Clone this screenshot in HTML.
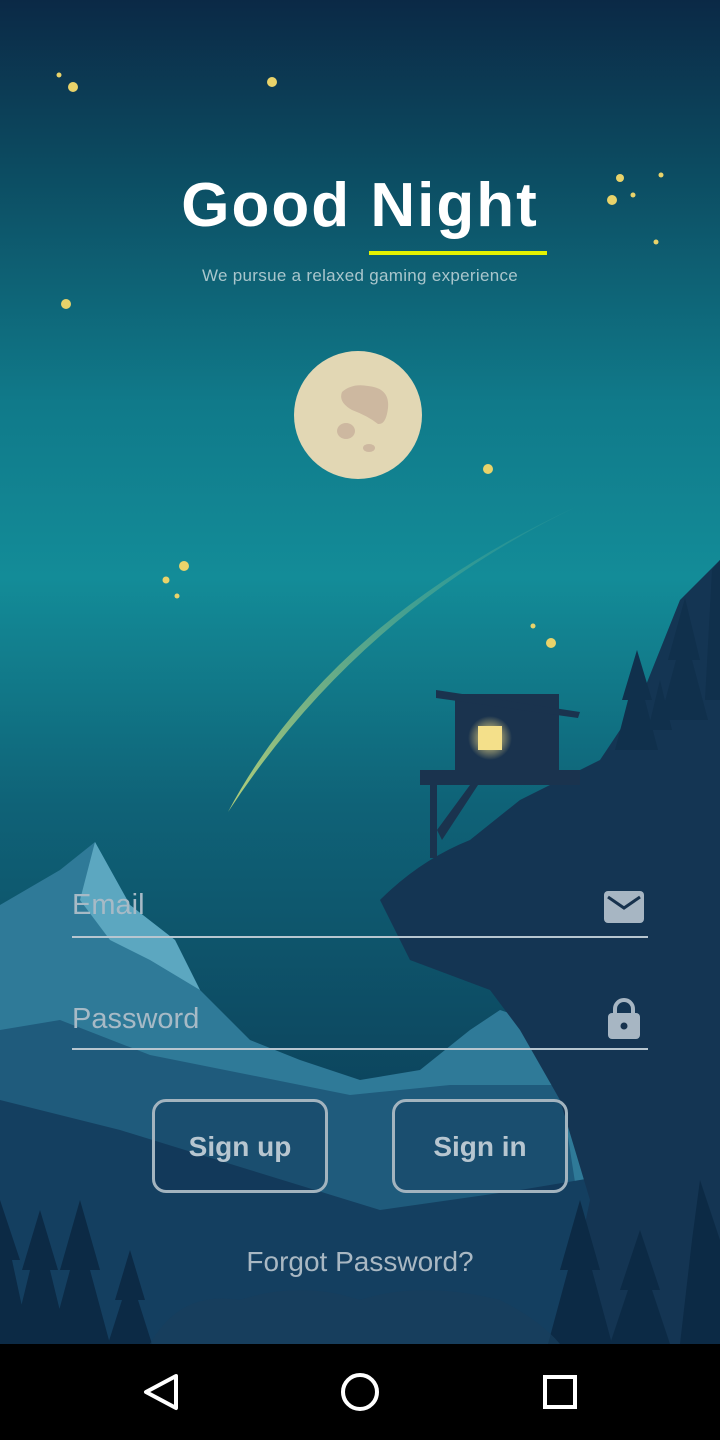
<!DOCTYPE html>
<html><head><meta charset="utf-8"><style>
html,body{margin:0;padding:0;width:720px;height:1440px;overflow:hidden;background:#000;font-family:"Liberation Sans",sans-serif}
.wrap{position:relative;width:720px;height:1440px}
svg.bg{position:absolute;left:0;top:0}
.title{position:absolute;left:0;width:720px;top:170px;text-align:center;color:#fff;font-size:62px;font-weight:bold;letter-spacing:2px;font-family:"Liberation Sans",sans-serif}
.uline{position:absolute;left:369px;top:251px;width:178px;height:4px;background:#e4f200}
.sub{position:absolute;left:0;width:720px;top:266px;text-align:center;color:#a9c6cc;font-size:17px;letter-spacing:0.3px}
.field{position:absolute;left:72px;width:576px;border-bottom:2px solid #b7c6d0;color:#a7bac6;font-size:29px}
.btn{position:absolute;top:1099px;width:176px;height:94px;border:3px solid #a3b4bf;border-radius:14px;box-sizing:border-box;color:#b7c6d0;font-size:28px;font-weight:bold;text-align:center;line-height:90px;background:rgba(10,40,70,0.25)}
.forgot{position:absolute;left:0;width:720px;top:1246px;text-align:center;color:#a9b8c3;font-size:28px}
.nav{position:absolute;left:0;top:1344px;width:720px;height:96px;background:#000}
</style></head><body><div class="wrap">
<svg class="bg" width="720" height="1344" viewBox="0 0 720 1344">
<defs>
<linearGradient id="sky" x1="0" y1="0" x2="0" y2="1">
<stop offset="0" stop-color="#0b2946"/>
<stop offset="0.12" stop-color="#0c4a60"/>
<stop offset="0.3" stop-color="#107a8a"/>
<stop offset="0.43" stop-color="#138c98"/>
<stop offset="0.6" stop-color="#0f6277"/>
<stop offset="1" stop-color="#0a2b47"/>
</linearGradient>
<linearGradient id="tail" x1="0" y1="1" x2="1" y2="0">
<stop offset="0" stop-color="#b7d27a"/>
<stop offset="1" stop-color="#3fa39b" stop-opacity="0.2"/>
</linearGradient>
<radialGradient id="glow"><stop offset="0" stop-color="#ffe98a"/><stop offset="1" stop-color="#ffe98a" stop-opacity="0"/></radialGradient>
</defs>
<rect width="720" height="1344" fill="url(#sky)"/>
<g fill="#e9d36a">
<circle cx="73" cy="87" r="5"/><circle cx="59" cy="75" r="2.5"/><circle cx="272" cy="82" r="5"/>
<circle cx="66" cy="304" r="5"/><circle cx="620" cy="178" r="4"/><circle cx="612" cy="200" r="5"/>
<circle cx="633" cy="195" r="2.5"/><circle cx="661" cy="175" r="2.5"/><circle cx="656" cy="242" r="2.5"/>
<circle cx="488" cy="469" r="5"/><circle cx="184" cy="566" r="5"/><circle cx="166" cy="580" r="3.5"/>
<circle cx="177" cy="596" r="2.5"/><circle cx="533" cy="626" r="2.5"/><circle cx="551" cy="643" r="5"/>
</g>
<circle cx="358" cy="415" r="64" fill="#e2d7b4"/>
<path d="M342 392 Q352 383 368 386 Q390 388 388 408 Q386 425 378 424 Q368 416 352 410 Q338 402 342 392Z" fill="#cdb8a0"/>
<ellipse cx="346" cy="431" rx="9" ry="8" fill="#cdb8a0"/><ellipse cx="369" cy="448" rx="6" ry="4" fill="#cdb8a0"/>
<path d="M228 812 Q330 620 580 505 Q360 610 228 812Z" fill="url(#tail)"/>
<!-- mountains -->
<path d="M0 905 L60 870 L95 842 L130 905 L175 940 L200 990 L250 1040 L300 1060 L360 1080 L420 1070 L470 1030 L500 1010 L560 1030 L600 1100 L600 1344 L0 1344Z" fill="#2f7a98"/>
<path d="M95 842 L130 905 L175 940 L200 990 L150 960 L110 940 L80 900Z" fill="#5ca7c0"/>
<path d="M0 1030 L60 1020 L150 1055 L250 1075 L350 1095 L450 1085 L560 1085 L600 1344 L0 1344Z" fill="#1f5b7c"/>
<path d="M0 1100 L120 1130 L250 1170 L380 1210 L520 1190 L640 1170 L720 1160 L720 1344 L0 1344Z" fill="#143f60"/>
<!-- cliff -->
<path d="M380 900 Q420 860 470 840 L520 800 L600 760 L640 700 L680 600 L720 560 L720 1344 L560 1344 L590 1200 L560 1100 L520 1030 L490 990 L410 960 Z" fill="#143553"/>
<g fill="#10304c">
<path d="M685 598 L700 660 L692 660 L708 720 L660 720 L676 660 L668 660Z"/>
<path d="M637 650 L652 700 L645 700 L658 750 L615 750 L628 700 L622 700Z"/>
<path d="M660 680 L672 730 L648 730Z"/>
<path d="M712 570 L720 560 L720 700 L705 700Z"/>
</g>
<!-- hut -->
<g fill="#1a334e">
<rect x="455" y="694" width="104" height="80"/>
<path d="M436 690 L580 712 L578 718 L436 698Z"/>
<rect x="430" y="780" width="7" height="78"/>
<path d="M437 830 L470 785 L478 785 L442 840Z"/>
</g>
<rect x="420" y="770" width="160" height="15" fill="#1a334e"/>
<circle cx="490" cy="738" r="22" fill="url(#glow)"/>
<rect x="478" y="726" width="24" height="24" fill="#f4e08a"/>
<!-- foreground trees -->
<g fill="#0c2a45">
<path d="M0 1200 L20 1260 L12 1260 L30 1344 L0 1344Z"/>
<path d="M40 1210 L58 1270 L50 1270 L68 1344 L12 1344 L30 1270 L22 1270Z"/>
<path d="M80 1200 L100 1270 L90 1270 L110 1344 L50 1344 L70 1270 L60 1270Z"/>
<path d="M130 1250 L145 1300 L138 1300 L152 1344 L108 1344 L122 1300 L115 1300Z"/>
<path d="M580 1200 L600 1270 L592 1270 L612 1344 L548 1344 L568 1270 L560 1270Z"/>
<path d="M640 1230 L660 1290 L652 1290 L670 1344 L610 1344 L628 1290 L620 1290Z"/>
<path d="M700 1180 L720 1240 L720 1344 L680 1344 L692 1240Z"/>
</g>
<path d="M150 1344 Q180 1290 240 1300 Q300 1280 360 1300 Q420 1280 500 1300 Q540 1320 560 1344Z" fill="#183f5c" opacity="0.7"/>
</svg>
<div class="title">Good Night</div>
<div class="uline"></div>
<div class="sub">We pursue a relaxed gaming experience</div>
<div class="field" style="top:889px;height:47px">Email
<svg style="position:absolute;right:4px;top:2px" width="40" height="32" viewBox="0 0 40 32"><rect width="40" height="32" rx="4" fill="#a7b6c3"/><path d="M4 6 L20 17 L36 6" stroke="#17324d" stroke-width="3" fill="none"/></svg></div>
<div class="field" style="top:1003px;height:45px">Password
<svg style="position:absolute;right:8px;top:-6px" width="32" height="42" viewBox="0 0 32 42"><path d="M7 18 V12 a9 9 0 0 1 18 0 V18" stroke="#a7b6c3" stroke-width="4" fill="none"/><rect x="0" y="16" width="32" height="26" rx="4" fill="#a7b6c3"/><circle cx="16" cy="29" r="3.5" fill="#17324d"/></svg></div>
<div class="btn" style="left:152px">Sign up</div>
<div class="btn" style="left:392px">Sign in</div>
<div class="forgot">Forgot Password?</div>
<div class="nav">
<svg width="720" height="96" viewBox="0 0 720 96"><path d="M176 32 L146 48 L176 64Z" stroke="#fff" stroke-width="4" fill="none" stroke-linejoin="round"/><circle cx="360" cy="48" r="17" stroke="#fff" stroke-width="4" fill="none"/><rect x="545" y="33" width="30" height="30" stroke="#fff" stroke-width="4" fill="none"/></svg>
</div>
</div></body></html>
